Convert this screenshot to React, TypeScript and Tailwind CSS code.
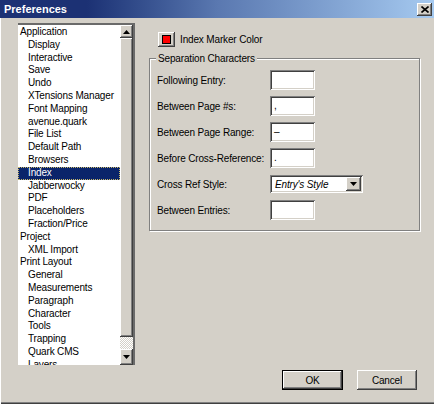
import React from 'react';

// ── Win2000 style helpers ─────────────────────────────────────────────────────
const raised =
  'bg-[#d4d0c8] shadow-[inset_-1px_-1px_0_#404040,inset_1px_1px_0_#ffffff,inset_-2px_-2px_0_#808080,inset_2px_2px_0_#d4d0c8]';
const sunken =
  'bg-white shadow-[inset_1px_1px_0_#808080,inset_-1px_-1px_0_#ffffff,inset_2px_2px_0_#404040,inset_-2px_-2px_0_#d4d0c8]';

type Item = { label: string; level: 0 | 1; selected?: boolean };

const items: Item[] = [
  { label: 'Application', level: 0 },
  { label: 'Display', level: 1 },
  { label: 'Interactive', level: 1 },
  { label: 'Save', level: 1 },
  { label: 'Undo', level: 1 },
  { label: 'XTensions Manager', level: 1 },
  { label: 'Font Mapping', level: 1 },
  { label: 'avenue.quark', level: 1 },
  { label: 'File List', level: 1 },
  { label: 'Default Path', level: 1 },
  { label: 'Browsers', level: 1 },
  { label: 'Index', level: 1, selected: true },
  { label: 'Jabberwocky', level: 1 },
  { label: 'PDF', level: 1 },
  { label: 'Placeholders', level: 1 },
  { label: 'Fraction/Price', level: 1 },
  { label: 'Project', level: 0 },
  { label: 'XML Import', level: 1 },
  { label: 'Print Layout', level: 0 },
  { label: 'General', level: 1 },
  { label: 'Measurements', level: 1 },
  { label: 'Paragraph', level: 1 },
  { label: 'Character', level: 1 },
  { label: 'Tools', level: 1 },
  { label: 'Trapping', level: 1 },
  { label: 'Quark CMS', level: 1 },
  { label: 'Layers', level: 1 },
];

function Arrow({ up }: { up?: boolean }) {
  return (
    <svg width="7" height="4" viewBox="0 0 7 4">
      {up ? <path d="M3.5 0 L7 4 L0 4 Z" fill="#000" /> : <path d="M0 0 L7 0 L3.5 4 Z" fill="#000" />}
    </svg>
  );
}

function ScrollBar() {
  return (
    <div className="w-[13px] h-full flex flex-col bg-[#d4d0c8]">
      <div className={`h-[13px] flex items-center justify-center ${raised}`}>
        <Arrow up />
      </div>
      <div className={`h-[299px] ${raised}`} />
      <div className="flex-1 bg-[repeating-conic-gradient(#ffffff_0_25%,#d4d0c8_0_50%)] bg-[length:2px_2px]" />
      <div className={`h-[16px] flex items-center justify-center ${raised}`}>
        <Arrow />
      </div>
    </div>
  );
}

function TextBox({ value }: { value: string }) {
  return (
    <div className={`w-[45px] h-[20px] pl-[4px] leading-[20px] ${sunken}`}>{value}</div>
  );
}

const rows: { label: string; value?: string; combo?: boolean }[] = [
  { label: 'Following Entry:', value: '' },
  { label: 'Between Page #s:', value: ',' },
  { label: 'Between Page Range:', value: '–' },
  { label: 'Before Cross-Reference:', value: '.' },
  { label: 'Cross Ref Style:', combo: true },
  { label: 'Between Entries:', value: '' },
];

export default function App() {
  return (
    <div
      className="w-[434px] h-[404px] bg-[#d4d0c8] flex flex-col text-[10px] tracking-[-0.15px] text-black shadow-[inset_1px_0_0_#ffffff,inset_0_-1px_0_#404040,inset_0_-2px_0_#808080] overflow-hidden"
      style={{ fontFamily: '"Liberation Sans", Arial, sans-serif' }}
    >
      {/* title bar */}
      <div className="h-[18px] flex items-center justify-between pl-[4px] pr-[2px] bg-gradient-to-r from-[#1c3174] from-20% via-[#5a78b0] to-[#a6caf0]">
        <span className="text-white font-bold text-[11px] tracking-normal">Preferences</span>
        <div className={`w-[15px] h-[13px] flex items-center justify-center ${raised}`}>
          <svg width="8" height="7" viewBox="0 0 8 7">
            <path d="M0.5 0.5 L7.5 6.5 M7.5 0.5 L0.5 6.5" stroke="#000" strokeWidth="1.6" />
          </svg>
        </div>
      </div>

      {/* body */}
      <div className="flex pl-[18px] pt-[5px]">
        {/* category list */}
        <div className="w-[117px] h-[342px] flex bg-white border-t-2 border-r-2 border-[#6a6a6a]">
          <div className="flex-1 pt-[1px] overflow-hidden">
            {items.map(it => (
              <div
                key={it.label}
                className={`h-[12.8px] leading-[12.8px] whitespace-nowrap ${it.level ? 'pl-[10px]' : 'pl-[2px]'} ${
                  it.selected ? 'bg-[#0a246a] text-white outline-1 outline-dotted outline-[#c8b86a] -outline-offset-1' : ''
                }`}
              >
                {it.label}
              </div>
            ))}
          </div>
          <ScrollBar />
        </div>

        {/* settings */}
        <div className="ml-[14px] w-[271px] pt-[9px]">
          <div className="flex items-center pl-[9px]">
            <div className={`w-[17px] h-[15px] flex items-center justify-center ${raised}`}>
              <div className="w-[9px] h-[9px] bg-[#ff0000] border border-black" />
            </div>
            <span className="ml-[5px]">Index Marker Color</span>
          </div>

          <div className="relative mt-[11px] border border-[#808080] shadow-[1px_1px_0_#ffffff,inset_1px_1px_0_#ffffff] pl-[7px] pt-[8px] pb-[7px]">
            <span className="absolute -top-[7px] left-[6px] px-[2px] bg-[#d4d0c8] leading-[13px]">
              Separation Characters
            </span>
            {rows.map(r => (
              <div key={r.label} className="h-[26px] flex items-center">
                <span className="w-[113px] whitespace-nowrap">{r.label}</span>
                {r.combo ? (
                  <div className={`w-[93px] h-[18px] flex items-center pl-[5px] pr-[2px] ${sunken}`}>
                    <span className="flex-1 italic">Entry's Style</span>
                    <div className={`w-[15px] h-[14px] flex items-center justify-center ${raised}`}>
                      <Arrow />
                    </div>
                  </div>
                ) : (
                  <TextBox value={r.value ?? ''} />
                )}
              </div>
            ))}
          </div>
        </div>
      </div>

      {/* buttons */}
      <div className="mt-[5px] flex justify-end gap-[14px] pr-[17px]">
        <div className="w-[61px] h-[20px] border border-black flex">
          <div className={`flex-1 flex items-center justify-center ${raised}`}>OK</div>
        </div>
        <div className={`w-[60px] h-[20px] flex items-center justify-center ${raised}`}>Cancel</div>
      </div>
    </div>
  );
}
